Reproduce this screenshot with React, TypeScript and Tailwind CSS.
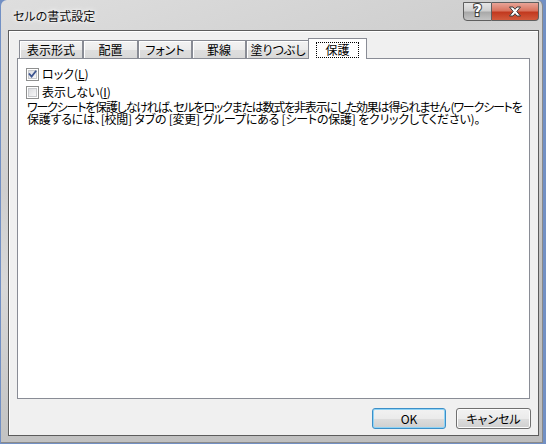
import React from "react";

const jp = "[font-family:'Noto_Sans_CJK_JP',sans-serif] [font-feature-settings:'palt']";

function CheckBox({ checked }: { checked: boolean }) {
  return (
    <div className="w-[13px] h-[13px] border border-[#8e8f8f] bg-white p-[1px] shrink-0">
      <div className="w-full h-full border border-[#c7c9cc] bg-[linear-gradient(135deg,#dcdde0,#f7f7f8)] relative">
        {checked && (
          <svg className="absolute -left-[1px] -top-[1px]" width="9" height="9" viewBox="0 0 9 9">
            <path d="M1.5 4.2 L3.6 6.6 L7.6 1.4" fill="none" stroke="#3d5590" strokeWidth="1.8" strokeLinecap="square" />
          </svg>
        )}
      </div>
    </div>
  );
}

function Tab({ label, cls }: { label: string; cls: string }) {
  return (
    <div
      className={`h-[18px] mb-[1px] border border-b-0 border-[#898c95] bg-[linear-gradient(#f3f3f3_0%,#ececec_50%,#dedede_51%,#d9d9d9_100%)] shadow-[inset_1px_1px_0_#fff] flex items-center justify-center text-[12px] leading-[12px] text-black ${cls}`}
    >
      <span className="pt-[1px]">{label}</span>
    </div>
  );
}

function Button({ label, def, cls }: { label: string; def?: boolean; cls: string }) {
  return (
    <div
      className={`h-[21px] rounded-[3px] border ${
        def ? "border-[#3c8fc8]" : "border-[#707070]"
      } bg-[linear-gradient(#f2f2f2_0%,#ebebeb_50%,#dddddd_51%,#cfcfcf_100%)] ${
        def ? "shadow-[inset_0_0_0_1px_#8fd3f5]" : "shadow-[inset_0_0_0_1px_#fcfcfc]"
      } flex items-center justify-center text-[12px] leading-[12px] text-black ${cls}`}
    >
      {label}
    </div>
  );
}

export default function App() {
  return (
    <div className={`w-[546px] h-[444px] bg-[#7290c4] ${jp}`}>
      <div className="relative ml-[1px] w-[542px] h-[443px] rounded-t-[6px] bg-[linear-gradient(160deg,#dedede_0%,#cfcfcf_30%,#d8d8d8_45%,#c2c2c2_70%,#bdbdbd_100%)] border border-[#8a8a8a] border-l-0 border-t-0">
        {/* title bar */}
        <div className="h-[30px] flex items-center pl-[12px] pt-[1px]">
          <span className="text-[12px] leading-[12px] text-[#101010] [text-shadow:0_0_6px_#ffffff,0_0_3px_#ffffff]">
            セルの書式設定
          </span>
        </div>
        {/* caption buttons */}
        <div className="absolute left-[462px] top-[2px] flex">
          <div className="w-[29px] h-[19px] rounded-bl-[4px] border border-[#5f5f5f] bg-[linear-gradient(#e6e6e6_0%,#d0d0d0_45%,#a9a9a9_55%,#c4c4c4_100%)] flex items-center justify-center">
            <span className="text-[15px] leading-[15px] font-bold text-white [font-family:'DejaVu_Sans',sans-serif] [-webkit-text-stroke:2px_#3c3c3c] [paint-order:stroke_fill]">
              ?
            </span>
          </div>
          <div className="w-[47px] h-[19px] rounded-br-[4px] border border-l-0 border-[#5f5f5f] bg-[linear-gradient(#e8a497_0%,#d9745f_45%,#c2391f_55%,#d25a3c_100%)] flex items-center justify-center">
            <svg width="14" height="11" viewBox="0 0 14 11">
              <path
                d="M1.5 1 L5 1 L7 3.3 L9 1 L12.5 1 L8.8 5.5 L12.5 10 L9 10 L7 7.7 L5 10 L1.5 10 L5.2 5.5 Z"
                fill="#ffffff"
                stroke="#3a3a3a"
                strokeWidth="1"
                strokeLinejoin="round"
              />
            </svg>
          </div>
        </div>
        {/* client area */}
        <div className="ml-[7px] w-[531px] h-[406px] border border-[#5c5c5c] bg-[#f0f0f0] shadow-[inset_1px_1px_0_#ffffff] flex flex-col pt-[7px]">
          {/* tab strip */}
          <div className="relative z-10 -mb-[1px] flex items-end h-[21px] pl-[10px]">
            <Tab label="表示形式" cls="w-[64px]" />
            <Tab label="配置" cls="w-[55px]" />
            <Tab label="フォント" cls="w-[54px]" />
            <Tab label="罫線" cls="w-[54px]" />
            <Tab label="塗りつぶし" cls="w-[64px]" />
            <div className="relative -ml-[2px] w-[59px] h-[21px] border border-b-0 border-[#898c95] bg-white flex items-start justify-center pt-[3px] text-[12px] leading-[12px] text-black">
              <span className="border border-dotted border-black px-[8px] pt-[1px] pb-[1px]">保護</span>
            </div>
          </div>
          {/* panel */}
          <div className="ml-[8px] w-[513px] h-[341px] border border-[#898c95] bg-white pt-[6px] pl-[8px] text-[12px] leading-[12px] text-black overflow-hidden">
            <div className="flex items-center h-[18px]">
              <CheckBox checked />
              <span className="ml-[3px]">
                ロック(<span className="underline">L</span>)
              </span>
            </div>
            <div className="flex items-center h-[18px]">
              <CheckBox checked={false} />
              <span className="ml-[3px]">
                表示しない(<span className="underline">I</span>)
              </span>
            </div>
            <div className="pl-[1px] whitespace-nowrap">
              <div className="h-[12px] tracking-[-1.2px]">
                ワークシートを保護しなければ、セルをロックまたは数式を非表示にした効果は得られません (ワークシートを
              </div>
              <div className="h-[12px] tracking-[-0.22px]">
                保護するには、[校閲] タブの [変更] グループにある [シートの保護] をクリックしてください)。
              </div>
            </div>
          </div>
          {/* buttons */}
          <div className="mt-[9px] flex justify-end gap-[10px] pr-[7px]">
            <Button label="OK" def cls="w-[74px]" />
            <Button label="キャンセル" cls="w-[75px]" />
          </div>
        </div>
      </div>
    </div>
  );
}
